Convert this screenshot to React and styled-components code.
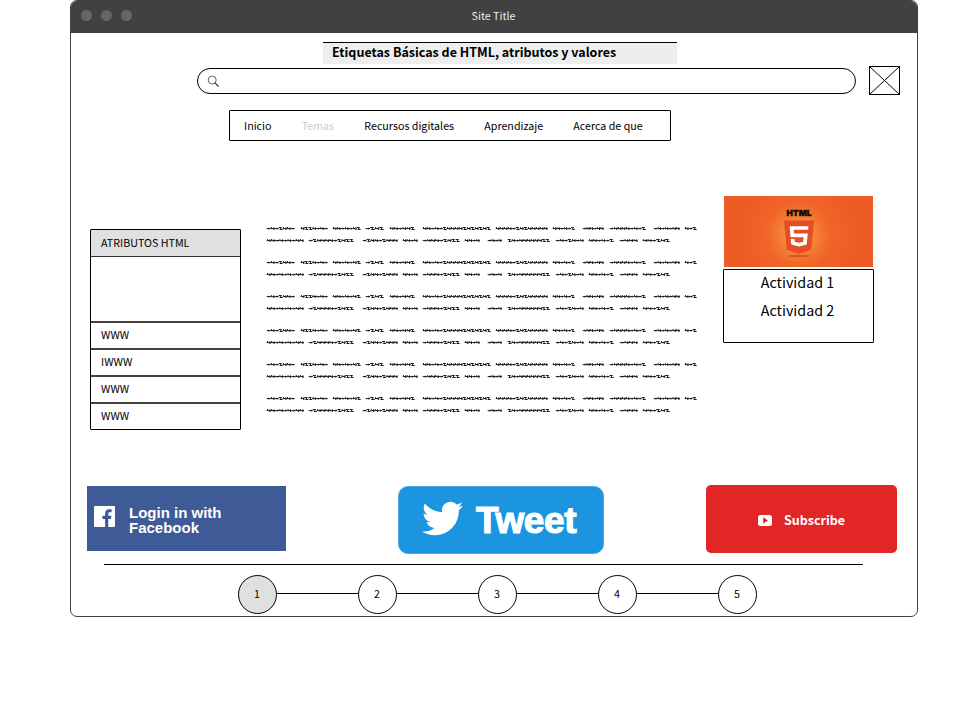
import React from "react";
import styled, { createGlobalStyle } from "styled-components";
import { FaHtml5, FaTwitter } from "react-icons/fa";

const GlobalStyle = createGlobalStyle`
  *, *::before, *::after { box-sizing: border-box; }
  body {
    margin: 0;
    background: #fff;
    color: #000;
    font-family: "Noto Sans CJK SC", "Open Sans", sans-serif;
    font-size: 10.7px;
    line-height: 16px;
  }
`;

const Page = styled.div`
  padding-left: 70px;
`;

const Window = styled.div`
  width: 848px;
  height: 617px;
  border: 1px solid #414141;
  border-radius: 7px;
  overflow: hidden;
`;

const TitleBar = styled.header`
  display: grid;
  grid-template-columns: 1fr auto 1fr;
  align-items: center;
  height: 32px;
  padding: 0 11px 4px 10px;
  background: #414141;
  color: #ececec;
`;

const SiteTitle = styled.span`
  padding-top: 2px;
`;

const Dots = styled.div`
  display: flex;
  gap: 9px;
`;

const Dot = styled.span`
  width: 11px;
  height: 11px;
  border-radius: 50%;
  background: #666;
`;

const Heading = styled.h1`
  width: 354px;
  height: 22px;
  margin: 9px 0 0 252px;
  padding-left: 9px;
  border-top: 1px solid #000;
  background: #eee;
  font-size: 12.5px;
  font-weight: 700;
  line-height: 17px;
  white-space: nowrap;
`;

const SearchRow = styled.div`
  display: flex;
  align-items: center;
  gap: 13px;
  height: 29px;
  margin: 2px 0 0 126px;
`;

const SearchBox = styled.div`
  display: flex;
  align-items: center;
  width: 659px;
  height: 26px;
  padding-left: 9px;
  border: 1px solid #000;
  border-radius: 13px;
`;

const Icon = styled.svg`
  display: block;
  flex: none;
  width: ${(p) => p.$w}px;
  height: ${(p) => p.$h}px;
`;

const Nav = styled.nav`
  display: flex;
  align-items: center;
  gap: 30.2px;
  width: 442px;
  height: 31px;
  margin: 15px 0 0 158px;
  padding: 0 0 0 14px;
  border: 1px solid #000;
  border-radius: 1px;
`;

const NavItem = styled.span`
  color: ${(p) => (p.$muted ? "#ccc" : "#000")};
  white-space: nowrap;
`;

const Main = styled.main`
  display: grid;
  grid-template-columns: 151px 431px 151px;
  column-gap: 25px;
  align-items: start;
  height: 289px;
  padding: 55px 0 0 19px;
`;

const Sidebar = styled.aside`
  height: 201px;
  margin-top: 33px;
  border: 1px solid #000;
  border-radius: 1px;
`;

const SidebarHead = styled.div`
  height: 27px;
  padding: 5px 0 0 10px;
  border-bottom: 1px solid #333;
  background: #e0e0e0;
`;

const SidebarBlank = styled.div`
  height: 64px;
`;

const SidebarRow = styled.div`
  height: 27px;
  padding: 4px 0 0 10px;
  border-top: 2px solid #414141;
`;

const Article = styled.div`
  display: flex;
  flex-direction: column;
  gap: 16px;
  margin-top: 30px;
`;

const Aside = styled.aside`
  display: flex;
  flex-direction: column;
  gap: 2px;
  margin-left: 1px;
`;

const Banner = styled.div`
  display: flex;
  flex-direction: column;
  align-items: center;
  width: 149px;
  height: 71px;
  margin-left: 1px;
  padding-top: 13px;
  background: radial-gradient(circle at 50% 55%, #f9a14c 0, #f68035 17px, #f16528 32px, #ec5c25 58px);
`;

const BannerLabel = styled.svg`
  display: block;
  width: 26px;
  height: 9px;
  font: 900 8px "Inter", "Liberation Sans", sans-serif;
`;

const Shield = styled.div`
  display: grid;
  place-items: center;
  width: 30px;
  height: 35px;
  color: #e44d26;
  background: linear-gradient(#fff, #fff) center / 20px 24px no-repeat;
  svg { display: block; width: 30px; height: 38px; }
`;

const Shadow = styled.span`
  width: 22px;
  height: 2px;
  margin-top: 2px;
  border-radius: 50%;
  background: #b84c17;
  opacity: 0.7;
`;

const Activities = styled.div`
  display: flex;
  flex-direction: column;
  align-items: center;
  width: 151px;
  height: 74px;
  padding-right: 2px;
  border: 1px solid #000;
  border-radius: 1px;
  font-size: 14.3px;
  line-height: 28px;
`;

const Activity = styled.span`
  height: 28px;
  line-height: 24px;
`;

const Socials = styled.div`
  display: flex;
  align-items: flex-start;
  height: 69px;
  margin-top: 55px;
  padding-left: 16px;
`;

const Facebook = styled.div`
  display: flex;
  align-items: center;
  gap: 14px;
  width: 199px;
  height: 65px;
  margin-top: 1px;
  padding: 0 7px 4px;
  background: #3e5a97;
  color: #fff;
  font: 700 15px/15px "Liberation Sans", Arial, sans-serif;
`;

const FacebookText = styled.span`
  width: 110px;
  padding-top: 6px;
`;

const Tweet = styled.div`
  display: flex;
  align-items: center;
  gap: 13px;
  width: 206px;
  height: 68px;
  margin: 1px 0 0 112px;
  padding-left: 23px;
  border: 1px solid #4da9e7;
  border-radius: 10px;
  background: #1b95e0;
  color: #fff;
  font: 700 37px/66px "Liberation Sans", Arial, sans-serif;
  letter-spacing: -0.4px;
  -webkit-text-stroke: 1.2px #fff;
  svg { display: block; width: 41px; height: 41px; margin-top: -3px; }
`;

const TweetLabel = styled.span`
  padding-top: 1px;
`;

const Subscribe = styled.div`
  display: flex;
  align-items: center;
  gap: 12px;
  width: 191px;
  height: 68px;
  margin-left: 102px;
  padding: 2px 0 0 52px;
  border-radius: 5px;
  background: #e22626;
  color: #fff;
  font-size: 12.5px;
  font-weight: 700;
`;

const Rule = styled.div`
  width: 759px;
  height: 1px;
  margin: 10px 0 0 33px;
  background: #000;
`;

const Steps = styled.div`
  display: flex;
  align-items: center;
  margin: 10px 0 0 167px;
`;

const Step = styled.span`
  display: grid;
  place-items: center;
  width: 39px;
  height: 39px;
  padding: 0 1px 1px 0;
  border: 1px solid #000;
  border-radius: 50%;
  background: ${(p) => (p.$active ? "#e0e0e0" : "#fff")};
`;

const Link = styled.span`
  width: 81px;
  height: 1px;
  margin-bottom: 2px;
  background: #000;
`;

// Each word: [start x, width, stroke pattern].
const lines = [
  [
    [0, 28, "-s-zss-"], [34, 27, "szzs-s-"], [66, 28, "ss-s-sz"], [99, 18, "-zsz"], [123, 25, "ss-ssz"],
    [156, 68, "ss-s-zsssszszszsz"], [229, 52, "ssss-zszsssss"], [286, 22, "ss-s-z"], [316, 21, "-ss-ss"],
    [343, 36, "-ssss-s-z"], [387, 26, "-s-s-ss"], [418, 12, "s-z"],
  ],
  [
    [0, 37, "ss-s-s-ss"], [42, 45, "-zssss-zszz"], [96, 35, "-zss-zsss"], [136, 15, "ss-s"],
    [156, 37, "-sss-zszz"], [198, 15, "ss-s"], [221, 14, "-s-s"], [241, 42, "zs-sssssszz"],
    [289, 28, "-s-zs-s"], [322, 25, "ss-s-z"], [353, 18, "-sss"], [376, 27, "ss-zsz"],
  ],
];

const glyph = {
  s: (x, u) => `M${x} 2.6H${x + u}M${x + u * 0.2} 1.1V2.6M${x + u * 0.8} 1.3V4`,
  "-": (x, u) => `M${x} 2.6H${x + u}M${x + u * 0.6} 1.8V3.4`,
  z: (x, u) => `M${x} 1.5H${x + u * 0.7}L${x + u * 0.3} 3.5H${x + u}`,
};

const wordPath = ([x, w, pattern]) => {
  const u = w / pattern.length;
  return [...pattern].map((c, i) => glyph[c](x + i * u, u)).join("");
};

const Paragraph = () => (
  <Icon $w={431} $h={18} viewBox="-0.7 0 431 18" fill="none" stroke="#111" strokeWidth="0.95">
    {lines.map((words, row) =>
      words.map((word) => (
        <path key={`${row}-${word[0]}`} d={wordPath(word)} transform={`translate(0 ${row * 12})`} />
      ))
    )}
  </Icon>
);

export default function App() {
  return (
    <Page>
      <GlobalStyle />
      <Window>
        <TitleBar>
          <Dots><Dot /><Dot /><Dot /></Dots>
          <SiteTitle>Site Title</SiteTitle>
        </TitleBar>
        <Heading>Etiquetas Básicas de HTML, atributos y valores</Heading>
        <SearchRow>
          <SearchBox>
            <Icon $w={12} $h={12} viewBox="0 0 12 12" fill="none" stroke="#222">
              <circle cx="5.2" cy="5" r="4" strokeWidth="0.7" />
              <path d="M8 7.8L11.5 11.5" strokeWidth="1.1" />
            </Icon>
          </SearchBox>
          <Icon $w={31} $h={29} viewBox="0 0 31 29" fill="none" stroke="#000">
            <rect x=".5" y=".5" width="30" height="28" />
            <path d="M.5 .5L30.5 28.5M30.5 .5L.5 28.5" strokeWidth="1" />
          </Icon>
        </SearchRow>
        <Nav>
          <NavItem>Inicio</NavItem>
          <NavItem $muted>Temas</NavItem>
          <NavItem>Recursos digitales</NavItem>
          <NavItem>Aprendizaje</NavItem>
          <NavItem>Acerca de que</NavItem>
        </Nav>
        <Main>
          <Sidebar>
            <SidebarHead>ATRIBUTOS HTML</SidebarHead>
            <SidebarBlank />
            <SidebarRow>WWW</SidebarRow>
            <SidebarRow>IWWW</SidebarRow>
            <SidebarRow>WWW</SidebarRow>
            <SidebarRow>WWW</SidebarRow>
          </Sidebar>
          <Article>
            {[0, 1, 2, 3, 4, 5].map((n) => <Paragraph key={n} />)}
          </Article>
          <Aside>
            <Banner>
              <BannerLabel viewBox="0 0 26 9">
                <text x="0.5" y="7" textLength="25" lengthAdjust="spacingAndGlyphs" fill="#160a04" stroke="#160a04" strokeWidth="0.4">HTML</text>
              </BannerLabel>
              <Shield><FaHtml5 preserveAspectRatio="none" /></Shield>
              <Shadow />
            </Banner>
            <Activities>
              <Activity>Actividad 1</Activity>
              <Activity>Actividad 2</Activity>
            </Activities>
          </Aside>
        </Main>
        <Socials>
          <Facebook>
            <Icon $w={21} $h={21} viewBox="0 0 21 21">
              <path fill="#fff" d="M1 0H20a1 1 0 0 1 1 1V20a1 1 0 0 1-1 1H14.3V13H17l.4-3.2h-3.1V7.8c0-.9.3-1.6 1.6-1.6h1.7V3.3c-.3 0-1.3-.1-2.4-.1-2.5 0-4.1 1.5-4.1 4.2v2.4H8.4V13h2.7v8H1a1 1 0 0 1-1-1V1a1 1 0 0 1 1-1z" />
            </Icon>
            <FacebookText>Login in with Facebook</FacebookText>
          </Facebook>
          <Tweet>
            <FaTwitter />
            <TweetLabel>Tweet</TweetLabel>
          </Tweet>
          <Subscribe>
            <Icon $w={14} $h={11} viewBox="0 0 14 11">
              <rect width="14" height="11" rx="2.5" fill="#fff" />
              <path d="M5.2 2.3L10 5.4L5.2 8.5Z" fill="#e22626" />
            </Icon>
            <span>Subscribe</span>
          </Subscribe>
        </Socials>
        <Rule />
        <Steps>
          {[1, 2, 3, 4, 5].map((n) => (
            <React.Fragment key={n}>
              {n > 1 && <Link />}
              <Step $active={n === 1}>{n}</Step>
            </React.Fragment>
          ))}
        </Steps>
      </Window>
    </Page>
  );
}
